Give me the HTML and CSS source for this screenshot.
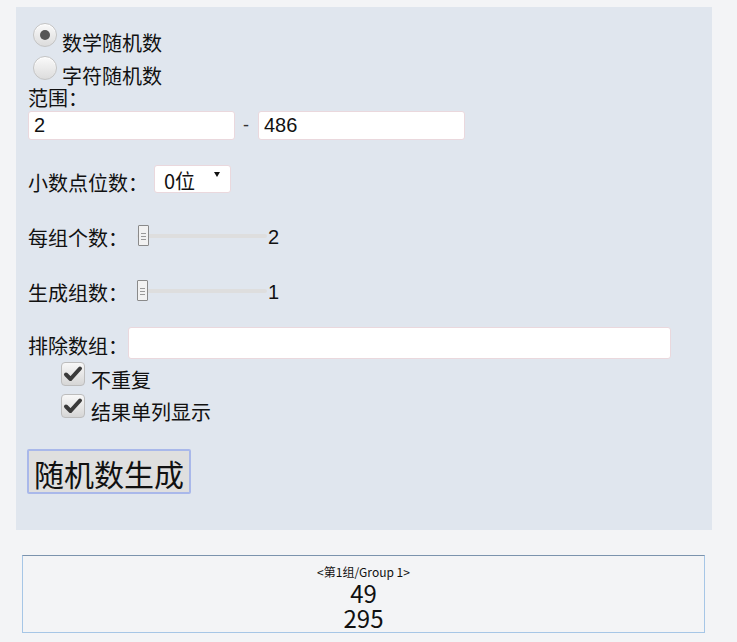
FILE: index.html
```html
<!DOCTYPE html>
<html lang="zh-CN">
<head>
    <meta charset="UTF-8">
    <meta name="viewport" content="width=device-width, initial-scale=1.0">
    <title>随机数生成器</title>
    <link rel="stylesheet" href="styles.css">
</head>
<body>
    <div class="panel">
        <label class="radio-row"><span class="radio on"></span>数学随机数</label>
        <label class="radio-row"><span class="radio"></span>字符随机数</label>
        <div class="caption">范围<span class="colon">：</span></div>
        <div class="range-row">
            <input type="text" class="num" value="2">
            <span class="dash">-</span>
            <input type="text" class="num" value="486">
        </div>

        <div class="field-row select-row">
            <span class="lbl">小数点位数<span class="colon">：</span></span>
            <span class="select-wrap"><select><option>0位</option><option>1位</option><option>2位</option></select></span>
        </div>

        <div class="field-row slider-row">
            <span class="lbl">每组个数<span class="colon">：</span></span>
            <input type="range" min="1" max="100" value="2">
            <span class="val">2</span>
        </div>

        <div class="field-row slider-row">
            <span class="lbl">生成组数<span class="colon">：</span></span>
            <input type="range" min="1" max="100" value="1">
            <span class="val">1</span>
        </div>

        <div class="field-row exclude-row">
            <span class="lbl">排除数组<span class="colon">：</span></span>
            <input type="text" class="exclude">
        </div>

        <label class="check-row"><span class="box"><svg viewBox="0 0 24 24" width="24" height="24"><path d="M5 12.5 L9.5 17 L19 6.5" fill="none" stroke="#3a3a3a" stroke-width="4" stroke-linecap="round" stroke-linejoin="round"/></svg></span>不重复</label>
        <label class="check-row"><span class="box"><svg viewBox="0 0 24 24" width="24" height="24"><path d="M5 12.5 L9.5 17 L19 6.5" fill="none" stroke="#3a3a3a" stroke-width="4" stroke-linecap="round" stroke-linejoin="round"/></svg></span>结果单列显示</label>

        <button class="gen">随机数生成</button>
    </div>

    <div class="result">
        <div class="group-title">&lt;第1组/Group 1&gt;</div>
        <div class="n">49</div>
        <div class="n">295</div>
    </div>
</body>
</html>
```

FILE: styles.css
```css
body { margin: 0; background: #f3f4f6; font-family: "Microsoft YaHei", "Noto Sans CJK SC", sans-serif; color: #111; }

.panel { width: 696px; height: 523px; margin: 7px 0 0 16px; padding: 15px 12px 0; box-sizing: border-box; background: #e0e6ee; font-size: 20px; }
.colon { font-family: "Noto Sans CJK JP", sans-serif; }

.radio-row { display: flex; align-items: flex-end; height: 33px; line-height: 24px; }
.radio { width: 22px; height: 22px; margin: 0 5px 8px 5px; border: 1px solid #c4c4c4; border-radius: 50%; background: linear-gradient(#fafafa, #dcdcdc); box-shadow: inset 0 1px 1px #fff; position: relative; }
.radio.on::after { content: ""; position: absolute; left: 6px; top: 6px; width: 10px; height: 10px; border-radius: 50%; background: #555; }

.caption { line-height: 20px; }

.range-row { display: flex; align-items: center; margin-top: 3px; }
.num { width: 207px; height: 29px; box-sizing: border-box; padding: 0 5px; border: 1px solid #ead8dd; border-radius: 3px; background: #fff; font: 20px "Liberation Sans", Arial, sans-serif; color: #111; }
.dash { margin: 0 9px 0 8px; font: 18px "Liberation Sans", Arial, sans-serif; color: #333; }

.field-row { display: flex; align-items: center; }
.lbl { padding-top: 5px; line-height: 24px; }

.select-row { margin-top: 26px; height: 28px; }
.select-wrap { position: relative; margin-left: 6px; }
.select-wrap select { appearance: none; -webkit-appearance: none; width: 77px; height: 28px; padding: 0 0 0 9px; border: 1px solid #ead8dd; border-radius: 3px; background: #fff; font-size: 20px; font-family: inherit; color: #111; }
.select-wrap::after { content: ""; position: absolute; right: 11px; top: 7px; border-left: 3px solid transparent; border-right: 3px solid transparent; border-top: 5px solid #111; }

.slider-row { margin-top: 31px; height: 21px; }
.slider-row + .slider-row { margin-top: 34px; }
.slider-row input[type=range] { -webkit-appearance: none; appearance: none; width: 130px; height: 21px; margin: 0 1px 0 9px; background: transparent; }
.slider-row input[type=range]::-webkit-slider-runnable-track { height: 4px; background: #dedede; border-radius: 2px; }
.slider-row input[type=range]::-webkit-slider-thumb { -webkit-appearance: none; width: 11px; height: 21px; margin-top: -9px; box-sizing: border-box; border: 1px solid #8a8a8a; border-radius: 1px;
    background: linear-gradient(#999, #999) 50% 7px / 5px 1px no-repeat, linear-gradient(#999, #999) 50% 10px / 5px 1px no-repeat, linear-gradient(#999, #999) 50% 13px / 5px 1px no-repeat, #f2f2f2; }
.val { font: 20px "Liberation Sans", Arial, sans-serif; padding-top: 3px; }

.exclude-row { margin-top: 26px; height: 32px; }
.exclude { width: 543px; height: 32px; margin-left: 0; box-sizing: border-box; border: 1px solid #ead8dd; border-radius: 3px; background: #fff; font: 20px "Liberation Sans", Arial, sans-serif; }

.check-row { display: flex; align-items: flex-end; height: 32px; line-height: 24px; padding-left: 33px; }
.exclude-row + .check-row { margin-top: 1px; }
.box { width: 22px; height: 22px; margin: 0 6px 6px 0; border: 1px solid #bdbdbd; border-radius: 4px; background: linear-gradient(#f8f8f8, #d6d6d6); display: flex; }
.box svg { margin: -1px; }

.gen { display: block; margin: 25px 0 0 -1px; width: 164px; height: 45px; padding: 0; border: 2px solid #a9b8ea; border-radius: 2px; background: #dfdfdf; font: 30px "Microsoft YaHei", "Noto Sans CJK SC", sans-serif; color: #111; }

.result { width: 683px; height: 78px; margin: 25px 0 0 22px; box-sizing: border-box; border: 1px solid #a6c6e6; border-top-color: #7b93ad; text-align: center; }
.group-title { font-size: 12px; line-height: 16px; margin-top: 8px; }
.n { font-size: 24px; line-height: 25px; }
```
